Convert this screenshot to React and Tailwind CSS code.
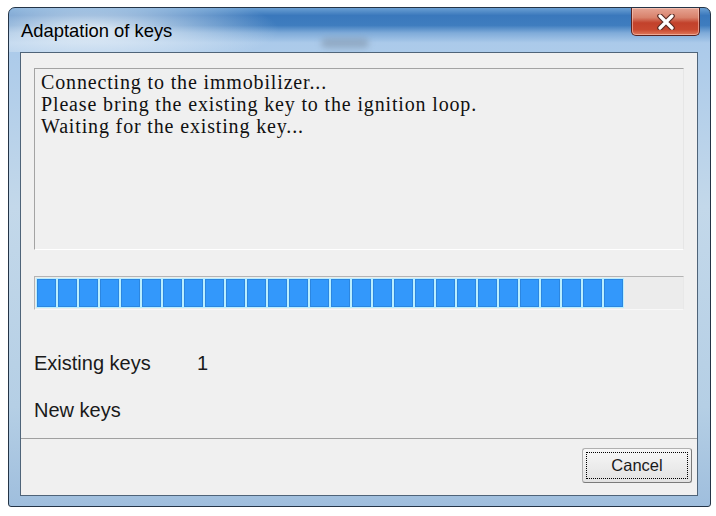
import React from 'react'

const serif = { fontFamily: '"Liberation Serif", "Times New Roman", serif' }

function CloseButton() {
  return (
    <div className="mr-[10px] flex h-[28px] w-[69px] items-center justify-center rounded-b-[5px] border border-t-0 border-[#5a2320] bg-[linear-gradient(to_bottom,#e6a493_0%,#d8826c_35%,#c2412b_55%,#c8482f_80%,#e07a5c_100%)] shadow-[inset_0_0_0_1px_rgba(255,220,210,0.5)]">
      <svg width="20" height="16" viewBox="0 0 20 16">
        <path d="M4 2 L16 14 M16 2 L4 14" stroke="#5b2a22" strokeWidth="5.5" strokeLinecap="round" />
        <path d="M4 2 L16 14 M16 2 L4 14" stroke="#ffffff" strokeWidth="3.2" strokeLinecap="round" />
      </svg>
    </div>
  )
}

function ProgressBar({ filled = 28 }) {
  const blocks = Array.from({ length: filled })
  return (
    <div className="h-[34px] border border-[#b4b4b4] border-b-[#f8f8f8] border-r-[#e8e8e8] bg-[#ececec] p-px">
      <div className="inline-flex h-full gap-[2px] bg-[#b9eeff] p-px">
        {blocks.map((_, i) => (
          <div key={i} className="h-full w-[19px] bg-[#3398fb] shadow-[inset_0_0_0_1px_#2c86e0]" />
        ))}
      </div>
    </div>
  )
}

export default function App() {
  return (
    <div
      className="h-[516px] w-[716px] bg-white pl-[8px] pt-[7px]"
      style={{ fontFamily: '"Liberation Sans", Arial, sans-serif' }}
    >
      {/* window frame */}
      <div className="flex h-[500px] w-[703px] flex-col rounded-t-[7px] rounded-b-[3px] border border-[#243446] bg-[linear-gradient(to_bottom,#6a9fd3_0%,#3a78bc_1.5%,#3f7dbf_3.5%,#7fabd9_5%,#abcaea_7%,#c3d8ea_40%,#b5cfe5_80%,#9fbedd_100%)]">
        {/* title bar */}
        <div className="relative flex h-[44px] items-start justify-between rounded-t-[6px] bg-[radial-gradient(ellipse_190px_40px_at_80px_22px,rgba(235,242,248,0.95),rgba(235,242,248,0)_100%)]">
          <div className="mt-[12px] pl-[12px] text-[18.4px] leading-[22px] text-black">Adaptation of keys</div>
          <div className="absolute left-[312px] top-[30px] h-[10px] w-[48px] rounded-full bg-[#7f94ab] opacity-60 blur-[3px]" />
          <CloseButton />
        </div>

        {/* client area */}
        <div className="ml-[11px] flex h-[444px] w-[678px] flex-col border border-[#4f6479] bg-[#f0f0f0]">
          <div className="flex flex-col px-[13px] pt-[15px]">
            <div
              className="h-[182px] border border-[#a3a3a3] border-b-white border-r-[#e6e6e6] pl-[6px] pt-[2px] text-[20px] leading-[22px] tracking-[0.85px] text-[#111]"
              style={serif}
            >
              <div>Connecting to the immobilizer...</div>
              <div>Please bring the existing key to the ignition loop.</div>
              <div>Waiting for the existing key...</div>
            </div>

            <div className="mt-[26px]">
              <ProgressBar filled={28} />
            </div>

            <div className="mt-[41px] flex h-[24px] items-center text-[20px] leading-[24px] text-[#1a1a1a]">
              <span className="w-[163px]">Existing keys</span>
              <span>1</span>
            </div>
            <div className="mt-[23px] flex h-[24px] items-center text-[20px] leading-[24px] text-[#1a1a1a]">
              <span>New keys</span>
            </div>
          </div>

          <div className="mt-[16px] border-t border-[#a0a0a0]" />

          <div className="mt-[9px] flex justify-end pr-[5px]">
            <button className="flex h-[35px] w-[110px] items-center justify-center rounded-[3px] border border-[#7a7a7a] border-l-[#b0b0b0] border-t-[#b0b0b0] bg-[linear-gradient(to_bottom,#f7f7f7,#ececec_50%,#e2e2e2)] p-[3px]">
              <span className="flex h-full w-full items-center justify-center border border-dotted border-black text-[16.5px] text-[#1a1a1a]">
                Cancel
              </span>
            </button>
          </div>
        </div>
      </div>
    </div>
  )
}
